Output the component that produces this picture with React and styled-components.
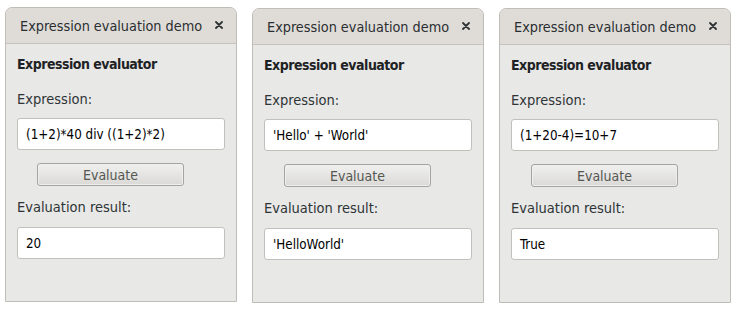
import React from "react";
import styled, { createGlobalStyle } from "styled-components";

const Global = createGlobalStyle`
  html, body { margin: 0; padding: 0; background: #ffffff; }
  body { font-family: "DejaVu Sans Condensed", "DejaVu Sans", sans-serif; color: #2e3436; }
`;

const Row = styled.div`
  display: flex;
  align-items: flex-start;
  gap: 15px;
  padding: 7px 0 0 5px;
`;

const Window = styled.div`
  width: 230px;
  height: 293px;
  margin-top: ${(p) => p.$offset || 0}px;
  border: 1px solid #c0bdb8;
  border-radius: 7px 7px 0 0;
  background: #e8e8e7;
  display: flex;
  flex-direction: column;
  overflow: hidden;
`;

const TitleBar = styled.div`
  height: 35px;
  flex: none;
  background: #dfdcd8;
  border-bottom: 1px solid #c6c3bf;
  display: flex;
  align-items: center;
  justify-content: space-between;
  padding: 0 13px 0 14px;
  font-size: 14.3px;
  color: #2a2e30;
`;

const CloseIcon = styled.svg`
  width: 8px;
  height: 8px;
  flex: none;
  margin-top: -2px;
`;

const Body = styled.div`
  padding: 10px 11px 0 11px;
  display: flex;
  flex-direction: column;
`;

const Heading = styled.div`
  font-weight: bold;
  font-size: 14px;
  letter-spacing: -0.5px;
  line-height: 20px;
  margin-bottom: 15px;
  color: #1e2224;
`;

const Label = styled.div`
  font-size: 14.5px;
  line-height: 20px;
  margin-bottom: ${(p) => p.$gap}px;
`;

const Field = styled.div`
  height: 30px;
  border: 1px solid #c2c0bc;
  border-radius: 3px;
  background: #ffffff;
  display: flex;
  align-items: center;
  padding: 0 8px;
  font-size: 13.3px;
  color: #000;
`;

const ButtonRow = styled.div`
  display: flex;
  padding: 13px 0 11px 20px;
`;

const Button = styled.div`
  width: 145px;
  height: 21px;
  border: 1px solid #a6a49f;
  border-radius: 3px;
  background: linear-gradient(#f0f0ef, #dad9d6);
  box-shadow: inset 0 0 0 1px #efefed;
  display: flex;
  align-items: center;
  justify-content: center;
  font-size: 14px;
  color: #555753;
`;

const data = [
  { expr: "(1+2)*40 div ((1+2)*2)", result: "20", offset: 0 },
  { expr: "'Hello' + 'World'", result: "'HelloWorld'", offset: 1 },
  { expr: "(1+20-4)=10+7", result: "True", offset: 1 },
];

export default function App() {
  return (
    <>
      <Global />
      <Row>
        {data.map((d, i) => (
          <Window key={i} $offset={d.offset}>
            <TitleBar>
              <span>Expression evaluation demo</span>
              <CloseIcon viewBox="0 0 8 8">
                <path d="M1 1 L7 7 M7 1 L1 7" stroke="#2e3436" strokeWidth="1.8" strokeLinecap="round" />
              </CloseIcon>
            </TitleBar>
            <Body>
              <Heading>Expression evaluator</Heading>
              <Label $gap={9}>Expression:</Label>
              <Field>{d.expr}</Field>
              <ButtonRow>
                <Button>Evaluate</Button>
              </ButtonRow>
              <Label $gap={10}>Evaluation result:</Label>
              <Field>{d.result}</Field>
            </Body>
          </Window>
        ))}
      </Row>
    </>
  );
}
